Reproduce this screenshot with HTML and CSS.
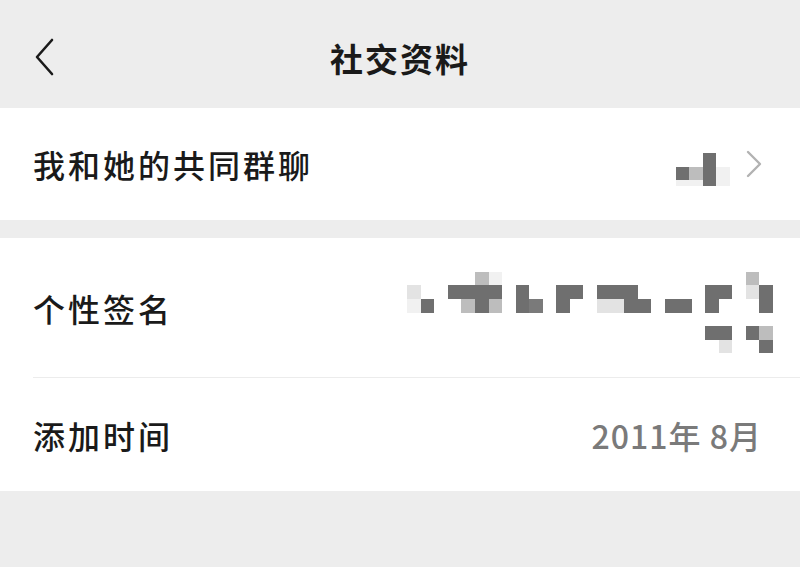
FILE: index.html
```html
<!DOCTYPE html>
<html lang="zh-CN">
<head>
  <meta charset="UTF-8" />
  <meta name="viewport" content="width=device-width, initial-scale=1" />
  <title>社交资料</title>
  <link rel="stylesheet" href="styles.css">
</head>
<body>
  <header class="nav">
    <a class="nav-back" href="#">
      <svg width="20" height="38" viewBox="0 0 20 38"><path d="M18 2 L3 19 L18 36" fill="none" stroke="#1a1a1a" stroke-width="2.6" stroke-linecap="round" stroke-linejoin="round"/></svg>
    </a>
    <h1 class="nav-title">社交资料</h1>
    <span></span>
  </header>

  <section class="group">
    <div class="cell cell-short">
      <span class="cell-label">我和她的共同群聊</span>
      <span class="cell-value">
        <span class="mosaic mosaic-small">
          <span class="mrow"><i></i><i></i><b class="d"></b></span>
          <span class="mrow"><b class="d"></b><b class="m"></b><b class="d"></b><b class="x"></b></span>
          <span class="mrow half"><b class="x"></b><b class="x"></b><b class="d"></b><b class="x"></b></span>
        </span>
        <svg class="arrow" width="16" height="28" viewBox="0 0 16 28"><path d="M2 2 L14 14 L2 26" fill="none" stroke="#b2b2b2" stroke-width="2.4" stroke-linecap="round" stroke-linejoin="round"/></svg>
      </span>
    </div>
  </section>

  <section class="group">
    <div class="cell cell-tall">
      <span class="cell-label">个性签名</span>
      <span class="mosaic mosaic-sign">
        <span class="mrow"><i></i><i></i><i></i><i></i><i></i><b class="m"></b><b class="x"></b><i></i><i></i><i></i><i></i><i></i><i></i><i></i><i></i><i></i><i></i><i></i><i></i><i></i><i></i><i></i><i></i><i></i><i></i><b class="m"></b><i></i></span>
        <span class="mrow"><b class="l"></b><i></i><i></i><b class="d"></b><b class="d"></b><b class="d"></b><b class="d"></b><i></i><b class="d"></b><i></i><i></i><b class="d"></b><b class="d"></b><i></i><b class="d"></b><b class="d"></b><b class="d"></b><i></i><i></i><i></i><i></i><i></i><b class="d"></b><b class="d"></b><i></i><b class="l"></b><b class="d"></b></span>
        <span class="mrow"><b class="x"></b><b class="d"></b><i></i><i></i><b class="m"></b><b class="d"></b><b class="m"></b><i></i><b class="d"></b><b class="n"></b><i></i><b class="d"></b><i></i><i></i><b class="l"></b><b class="l"></b><b class="d"></b><b class="d"></b><i></i><b class="d"></b><b class="d"></b><i></i><b class="d"></b><i></i><i></i><i></i><b class="d"></b></span>
        <span class="mrow"><i></i></span>
        <span class="mrow"><i></i><i></i><i></i><i></i><i></i><i></i><i></i><i></i><i></i><i></i><i></i><i></i><i></i><i></i><i></i><i></i><i></i><i></i><i></i><i></i><i></i><i></i><b class="d"></b><b class="d"></b><i></i><b class="d"></b><b class="m"></b></span>
        <span class="mrow"><i></i><i></i><i></i><i></i><i></i><i></i><i></i><i></i><i></i><i></i><i></i><i></i><i></i><i></i><i></i><i></i><i></i><i></i><i></i><i></i><i></i><i></i><i></i><b class="l"></b><i></i><i></i><b class="d"></b></span>
      </span>
    </div>
    <div class="divider"></div>
    <div class="cell cell-date">
      <span class="cell-label">添加时间</span>
      <span class="cell-text">2011年 8月</span>
    </div>
  </section>
</body>
</html>
```

FILE: styles.css
```css
body {
  margin: 0;
  background: #ededed;
  font-family: 'Noto Sans CJK SC', 'Noto Sans', sans-serif;
  color: #1a1a1a;
}

.nav {
  height: 108px;
  display: grid;
  grid-template-columns: 1fr auto 1fr;
  align-items: center;
}
.nav-back { display: flex; align-items: center; padding-left: 34px; margin-top: 6px; }
.nav-title {
  margin: 8px 0 0;
  font-size: 33px;
  font-weight: 700;
  letter-spacing: 2px;
}

.group {
  background: #fff;
  margin-bottom: 18px;
}

.cell {
  display: flex;
  align-items: center;
  justify-content: space-between;
  padding: 0 38px 0 33px;
}
.cell-short { height: 112px; }
.cell-tall { height: 139px; }
.cell-date { height: 113px; }

.cell-label {
  font-size: 32px;
  font-weight: 500;
  letter-spacing: 3px;
}
.cell-value { display: flex; align-items: center; gap: 16px; }
.cell-text {
  font-size: 32px;
  font-weight: 500;
  color: #7a7a7a;
  letter-spacing: 1px;
}

.divider {
  height: 1px;
  background: #ececec;
  margin-left: 33px;
}

.mosaic { display: flex; flex-direction: column; }
.mosaic-small { margin-top: 11px; }
.mosaic-sign { margin-top: 10px; margin-right: -11px; }
.mrow { display: flex; height: 13.55px; }
.mrow.half { height: 6px; }
.mrow i, .mrow b { width: 13.55px; height: 100%; display: block; }
.mrow .d { background: #6f6f6f; }
.mrow .n { background: #7a7a7a; }
.mrow .m { background: #bdbdbd; }
.mrow .l { background: #e3e3e3; }
.mrow .x { background: #f1f1f1; }

.arrow { display: block; }
```
